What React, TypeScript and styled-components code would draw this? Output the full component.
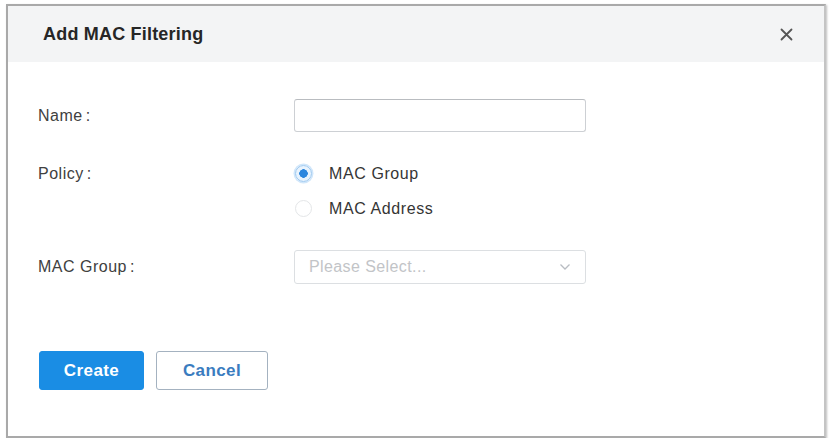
import styled, { createGlobalStyle } from "styled-components";

const GlobalStyle = createGlobalStyle`
  html, body {
    margin: 0;
    padding: 0;
    background: #ffffff;
    font-family: "Liberation Sans", Arial, sans-serif;
  }
`;

export default function App(): JSX.Element {
  return (
    <>
      <GlobalStyle />
      <StyledDialog>
        <StyledHeader>
          <h1>Add MAC Filtering</h1>
          <StyledClose aria-label="close">
            <svg width="13" height="13" viewBox="0 0 13 13">
              <path
                d="M1.5 1.5 L11.5 11.5 M11.5 1.5 L1.5 11.5"
                stroke="#555"
                strokeWidth="1.8"
                strokeLinecap="round"
              />
            </svg>
          </StyledClose>
        </StyledHeader>
        <StyledBody>
          <StyledRow>
            <StyledLabel>
              Name<span>:</span>
            </StyledLabel>
            <StyledInput type="text" />
          </StyledRow>
          <StyledRow $top>
            <StyledLabel $tall>
              Policy<span>:</span>
            </StyledLabel>
            <StyledRadioGroup>
              <StyledRadioItem>
                <StyledRadio $checked />
                MAC Group
              </StyledRadioItem>
              <StyledRadioItem>
                <StyledRadio />
                MAC Address
              </StyledRadioItem>
            </StyledRadioGroup>
          </StyledRow>
          <StyledRow>
            <StyledLabel>
              MAC Group<span>:</span>
            </StyledLabel>
            <StyledSelect>
              <p>Please Select...</p>
              <svg width="12" height="8" viewBox="0 0 12 8">
                <path
                  d="M1.5 1.5 L6 6 L10.5 1.5"
                  stroke="#b8bcc2"
                  strokeWidth="1.3"
                  fill="none"
                />
              </svg>
            </StyledSelect>
          </StyledRow>
          <StyledActions>
            <StyledButton $primary>Create</StyledButton>
            <StyledButton>Cancel</StyledButton>
          </StyledActions>
        </StyledBody>
      </StyledDialog>
    </>
  );
}

const StyledDialog = styled.div`
  margin: 4px 0 0 6px;
  width: 820px;
  height: 434px;
  box-sizing: border-box;
  border: 2px solid #a9a9a9;
  border-right-color: #c4c4c4;
  box-shadow: 1px 1px 2px rgba(0, 0, 0, 0.25);
  background: #ffffff;
  display: flex;
  flex-direction: column;
`;

const StyledHeader = styled.div`
  height: 56px;
  background: #f3f4f5;
  display: flex;
  align-items: center;
  justify-content: space-between;
  padding: 0 31px 0 35px;

  h1 {
    margin: 0;
    font-size: 18px;
    font-weight: 700;
    letter-spacing: 0.2px;
    color: #262626;
  }
`;

const StyledClose = styled.div`
  display: flex;
  align-items: center;
  justify-content: center;
  width: 14px;
  height: 14px;
`;

const StyledBody = styled.div`
  padding: 37px 0 0 30px;
  display: flex;
  flex-direction: column;
  gap: 24px;
`;

const StyledRow = styled.div<{ $top?: boolean }>`
  display: flex;
  align-items: ${({ $top }) => ($top ? "flex-start" : "center")};
`;

const StyledLabel = styled.div<{ $tall?: boolean }>`
  width: 256px;
  font-size: 16px;
  letter-spacing: 0.5px;
  line-height: ${({ $tall }) => ($tall ? "35px" : "20px")};
  color: #404040;

  span {
    margin-left: 3px;
  }
`;

const StyledInput = styled.input`
  width: 292px;
  height: 33px;
  box-sizing: border-box;
  border: 1px solid #cdd0d4;
  border-top-color: #b9bcc0;
  border-radius: 3px;
  background: #ffffff;
  outline: none;
`;

const StyledRadioGroup = styled.div`
  display: flex;
  flex-direction: column;
`;

const StyledRadioItem = styled.label`
  height: 35px;
  display: flex;
  align-items: center;
  font-size: 16px;
  letter-spacing: 0.6px;
  color: #353535;
`;

const StyledRadio = styled.span<{ $checked?: boolean }>`
  width: 17px;
  height: 17px;
  box-sizing: border-box;
  margin: 0 17px 0 1px;
  border-radius: 50%;
  border: 1px solid ${({ $checked }) => ($checked ? "#9cc8f0" : "#e4e6e8")};
  background: ${({ $checked }) =>
    $checked
      ? "radial-gradient(circle, #2b86de 0 4px, #e8f3fd 4.5px)"
      : "#ffffff"};
  box-shadow: ${({ $checked }) =>
    $checked ? "0 0 0 1.5px rgba(170, 210, 245, 0.55)" : "none"};
`;

const StyledSelect = styled.div`
  width: 292px;
  height: 34px;
  box-sizing: border-box;
  border: 1px solid #dcdfe2;
  border-radius: 3px;
  display: flex;
  align-items: center;
  justify-content: space-between;
  padding: 0 14px 0 14px;

  p {
    margin: 0;
    font-size: 16px;
    letter-spacing: 0.4px;
    color: #c2c4c7;
  }
`;

const StyledActions = styled.div`
  display: flex;
  gap: 12px;
  margin-top: 43px;
  margin-left: 1px;
`;

const StyledButton = styled.button<{ $primary?: boolean }>`
  height: 39px;
  width: ${({ $primary }) => ($primary ? "105px" : "112px")};
  box-sizing: border-box;
  border-radius: 3px;
  font-family: "Liberation Sans", Arial, sans-serif;
  font-size: 17px;
  font-weight: 700;
  letter-spacing: 0.4px;
  cursor: pointer;
  border: 1px solid ${({ $primary }) => ($primary ? "#1a8de4" : "#a4b2c0")};
  background: ${({ $primary }) => ($primary ? "#1a8de4" : "#ffffff")};
  color: ${({ $primary }) => ($primary ? "#ffffff" : "#3a7cbf")};
`;
